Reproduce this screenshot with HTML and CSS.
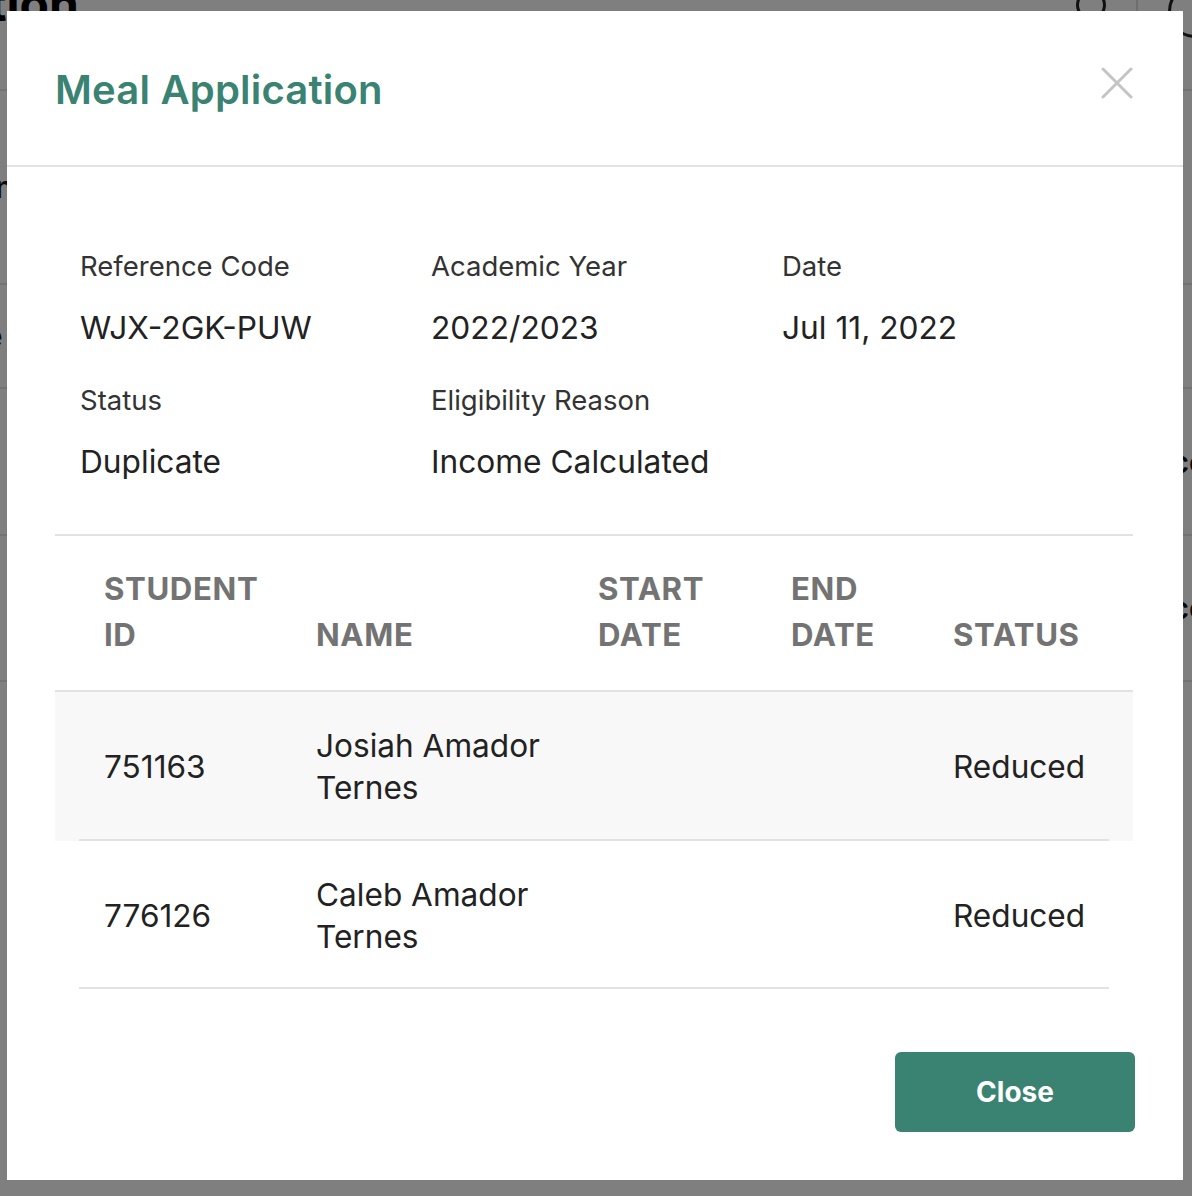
FILE: index.html
```html
<!DOCTYPE html>
<html lang="en">
<head>
<meta charset="utf-8">
<title>Meal Application</title>
<link rel="stylesheet" href="styles.css">
</head>
<body>
<div class="page">
  <div class="page-top">
    <h1 class="page-title">Application</h1>
    <div class="page-tools">
      <span class="tool-circle"></span>
      <span class="tool-sep"></span>
      <span class="tool-circle big"></span>
    </div>
  </div>
  <div class="page-row"><span>Meal Applications</span><span></span></div>
  <div class="page-row"><span>Reference Code</span><span>B</span></div>
  <div class="page-row"><span>Status</span><span>Income</span></div>
  <div class="page-row"><span>2019</span><span>Income</span></div>
</div>

<div class="backdrop">
  <div class="modal">
    <div class="modal-header">
      <h2 class="modal-title">Meal Application</h2>
      <button class="modal-x" aria-label="Close">
        <svg width="32" height="32" viewBox="0 0 32 32"><path d="M2 2 L30 30 M30 2 L2 30" stroke="#c4c4c4" stroke-width="3" stroke-linecap="round" fill="none"/></svg>
      </button>
    </div>
    <div class="modal-body">
      <div class="info">
        <div class="field"><div class="label">Reference Code</div><div class="value">WJX-2GK-PUW</div></div>
        <div class="field"><div class="label">Academic Year</div><div class="value">2022/2023</div></div>
        <div class="field"><div class="label">Date</div><div class="value">Jul 11, 2022</div></div>
        <div class="field"><div class="label">Status</div><div class="value">Duplicate</div></div>
        <div class="field"><div class="label">Eligibility Reason</div><div class="value">Income Calculated</div></div>
      </div>
      <div class="table">
        <div class="thead">
          <div class="th">STUDENT<br>ID</div>
          <div class="th">NAME</div>
          <div class="th">START<br>DATE</div>
          <div class="th">END<br>DATE</div>
          <div class="th">STATUS</div>
        </div>
        <div class="tr shaded">
          <div class="td">751163</div>
          <div class="td">Josiah Amador<br>Ternes</div>
          <div class="td"></div>
          <div class="td"></div>
          <div class="td">Reduced</div>
        </div>
        <div class="tr">
          <div class="td">776126</div>
          <div class="td">Caleb Amador<br>Ternes</div>
          <div class="td"></div>
          <div class="td"></div>
          <div class="td">Reduced</div>
        </div>
      </div>
    </div>
    <div class="modal-footer">
      <button class="btn-close">Close</button>
    </div>
  </div>
</div>
</body>
</html>
```

FILE: styles.css
```css
* { box-sizing: border-box; }
html, body { margin: 0; padding: 0; }
body {
  width: 1192px;
  height: 1196px;
  overflow: hidden;
  background: #ffffff;
  font-family: Inter, "Noto Sans", sans-serif;
  color: #222;
}

/* underlying page (seen through the backdrop) */
.page-top {
  height: 91px;
  display: flex;
  justify-content: space-between;
  align-items: flex-start;
  border-bottom: 2px solid #e4e4e4;
}
.page-title {
  margin: -26px 0 0 -190px;
  font-size: 48px;
  font-weight: 700;
  color: #000;
}
.page-tools { display: flex; align-items: flex-start; gap: 30px; margin-right: -30px; }
.tool-circle {
  display: block; width: 30px; height: 30px; border: 3px solid #222; border-radius: 50%;
  margin-top: -10px;
}
.tool-circle.big { width: 54px; height: 54px; margin-top: -16px; }
.tool-sep { display: block; width: 2px; height: 40px; background: #ddd; margin-top: -4px; }
.page-row {
  height: 104px;
  display: flex; justify-content: space-between; align-items: center;
  font-size: 30px; font-weight: 600; color: #111;
  border-bottom: 2px solid #e4e4e4;
}
.page-row span:first-child { margin-left: -230px; }
.page-row span:last-child { margin-right: -60px; }
.page-row:nth-child(2) { height: 194px; }
.page-row:nth-child(4) { height: 147px; }
.page-row:nth-child(5) { height: 146px; }

/* overlay */
.backdrop {
  position: fixed;
  inset: 0;
  background: rgba(0, 0, 0, 0.5);
  padding: 11px 9px 16px 7px;
}
.modal {
  width: 1176px;
  height: 1169px;
  background: #fff;
  display: flex;
  flex-direction: column;
}
.modal-header {
  height: 156px;
  flex: none;
  display: flex;
  align-items: center;
  justify-content: space-between;
  padding: 0 50px 0 48px;
  border-bottom: 2px solid #e2e2e2;
}
.modal-title {
  margin: 2px 0 0 0;
  font-size: 40px;
  font-weight: 600;
  color: #3a8272;
  letter-spacing: 0.2px;
}
.modal-x {
  border: 0; background: none; padding: 0; width: 32px; height: 32px;
  margin-top: -10px; cursor: pointer;
}
.modal-x svg { display: block; }

.modal-body { padding: 0 50px 0 48px; flex: 1; }
.info {
  display: grid;
  grid-template-columns: 351px 351px 1fr;
  row-gap: 31px;
  padding: 80px 24px 50px 25px;
  border-bottom: 2px solid #e2e2e2;
}
.label { font-size: 27.5px; line-height: 38px; color: #333; }
.value { font-size: 31.7px; line-height: 44px; color: #222; margin-top: 21px; }

.thead, .tr {
  display: grid;
  grid-template-columns: 212px 282px 193px 162px 1fr;
  padding-left: 49px;
}
.thead {
  height: 156px;
  align-items: end;
  padding-bottom: 32px;
  border-bottom: 2px solid #e2e2e2;
}
.th {
  font-size: 31.2px;
  line-height: 46px;
  font-weight: 700;
  color: #737373;
  letter-spacing: 0.6px;
}
.tr {
  position: relative;
  height: 148.5px;
  align-items: center;
}
.tr::after {
  content: "";
  position: absolute;
  left: 24px; right: 24px; bottom: 0;
  height: 2px;
  background: #e2e2e2;
}
.tr.shaded { background: #f8f8f8; }
.td { font-size: 31.6px; line-height: 42px; color: #222; padding-top: 2px; }

.modal-footer {
  flex: none;
  display: flex;
  justify-content: flex-end;
  padding: 0 48px 48px;
}
.btn-close {
  width: 240px; height: 80px;
  border: 0; border-radius: 6px;
  background: #3a8272;
  color: #fff;
  font-family: Inter, "Noto Sans", sans-serif;
  font-size: 28px; font-weight: 700;
  cursor: pointer;
}
```
